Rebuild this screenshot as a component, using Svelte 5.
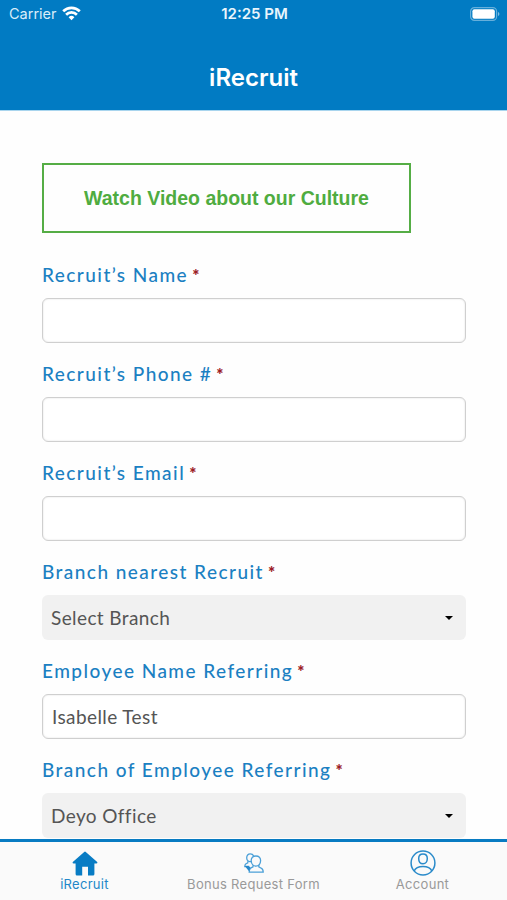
<script lang="ts">
  interface Field {
    id: string;
    label: string;
    type: 'text' | 'select';
    value: string;
  }

  let fields = $state<Field[]>([
    { id: 'name', label: 'Recruit’s Name', type: 'text', value: '' },
    { id: 'phone', label: 'Recruit’s Phone #', type: 'text', value: '' },
    { id: 'email', label: 'Recruit’s Email', type: 'text', value: '' },
    { id: 'branch', label: 'Branch nearest Recruit', type: 'select', value: 'Select Branch' },
    { id: 'employee', label: 'Employee Name Referring', type: 'text', value: 'Isabelle Test' },
    { id: 'office', label: 'Branch of Employee Referring', type: 'select', value: 'Deyo Office' },
  ]);

  const tabs = [
    { id: 'home', label: 'iRecruit' },
    { id: 'bonus', label: 'Bonus Request Form' },
    { id: 'account', label: 'Account' },
  ];

  let activeTab = $state('home');
</script>

<div class="screen">
  <header>
    <div class="status-bar">
      <div class="carrier">
        <span>Carrier</span>
        <svg width="19" height="15" viewBox="0 0 19 15" fill="none" stroke="#fff" stroke-width="2.7">
          <path d="M1.2 5.3a11.8 11.8 0 0 1 16.6 0" />
          <path d="M4.1 8.7a7.6 7.6 0 0 1 10.8 0" />
          <path d="M6.6 11.2a4.1 4.1 0 0 1 5.8 0L9.5 14.2z" fill="#fff" stroke="none" />
        </svg>
      </div>
      <span class="clock">12:25 PM</span>
      <svg class="battery" width="31" height="14" viewBox="0 0 31 14">
        <rect x="1.6" y="0.6" width="26" height="12.8" rx="3.8" fill="none" stroke="#fff" stroke-opacity="0.4" stroke-width="1.2" />
        <rect x="3.4" y="2.3" width="22.4" height="9.4" rx="2" fill="#fff" />
        <path d="M29 5c1.9.6 1.9 3.4 0 4z" fill="#fff" fill-opacity="0.5" />
      </svg>
    </div>
    <h1>iRecruit</h1>
  </header>

  <main>
    <button class="video-btn">Watch Video about our Culture</button>

    {#each fields as field}
      <div class="field">
        <label for={field.id}>
          <span>{field.label}</span>
          <span class="required">*</span>
        </label>
        {#if field.type === 'text'}
          <input id={field.id} type="text" bind:value={field.value} />
        {:else}
          <button id={field.id} class="select">
            <span>{field.value}</span>
            <svg width="8" height="4" viewBox="0 0 8 4"><path d="M0 0h8L4 4z" /></svg>
          </button>
        {/if}
      </div>
    {/each}
  </main>

  <nav>
    {#each tabs as tab}
      <button class="tab" class:active={activeTab === tab.id} onclick={() => (activeTab = tab.id)}>
        <span class="tab-icon">
          {#if tab.id === 'home'}
            <svg width="26" height="25" viewBox="0 0 26 25" fill="#087cc4">
              <path d="M12.2.9Q13 .3 13.8.9L25.2 11.1Q26 12.4 24.5 12.6H22.4V23Q22.4 24.5 21 24.5H16V15.8H10.2V24.5H5Q3.6 24.5 3.6 23V12.6H1.5Q0 12.4.8 11.1z" />
            </svg>
          {:else if tab.id === 'bonus'}
            <svg width="20" height="20" viewBox="0 0 20 20" fill="none" stroke="#4ba0d8" stroke-width="1.3">
              <path d="M7.3 8.3C4.9 9.4 2.7 7.7 2.7 5 2.7 2.4 4.1.9 6.2.9c1.7 0 2.9.8 3.5 2.1" />
              <path d="M3.8 8.3v1.5L1.7 11Q.8 11.7.8 13.5h4.500" />
              <path d="M7.200 7.800C7.100 4.800 8.900 3 11.900 3s4.800 1.800 4.700 4.800c-.2 3.100-2.100 5.300-4.700 5.300S7.300 10.900 7.200 7.800z" />
              <path d="M9 12.300v1.500l-2.400 1.300Q5.200 16 5.200 19.200h14c0-2.400-.5-3.400-2-4l-2.400-1.300v-1.600" />
              <path d="M.8 13l4.200 5.200 1.400-3.600-2-1.600z" fill="#2587ca" stroke="none" />
            </svg>
          {:else}
            <svg width="26" height="26" viewBox="0 0 26 26" fill="none" stroke="#2b8bca" stroke-width="1.5">
              <circle cx="13" cy="13" r="11.9" />
              <path d="M8.7 8.5C8.7 5.5 10.3 4 13 4s4.3 1.500 4.300 4.500c0 3.200-1.700 5.300-4.300 5.300s-4.300-2.100-4.300-5.300z" />
              <path d="M4.2 20.9c1.2-2.9 4.6-4.4 8.800-4.400s7.600 1.500 8.800 4.400" />
            </svg>
          {/if}
        </span>
        <span class="tab-label">{tab.label}</span>
      </button>
    {/each}
  </nav>
</div>

<style>
  :global(body) {
    margin: 0;
    background: #fefefe;
  }
  .screen {
    display: flex;
    flex-direction: column;
    height: 900px;
    overflow: hidden;
    background: #fefefe;
    font-family: Inter, 'Liberation Sans', sans-serif;
  }
  button {
    padding: 0;
    border: none;
    background: none;
    font-family: inherit;
    cursor: pointer;
  }
  header {
    flex: none;
    height: 111px;
    background: #017bc3;
    color: #fff;
    border-bottom: 1px solid #a9d5ee;
    box-sizing: border-box;
  }
  .status-bar {
    display: grid;
    grid-template-columns: 1fr auto 1fr;
    align-items: center;
    height: 27px;
    padding: 0 7px 0 9px;
  }
  .carrier {
    display: flex;
    align-items: center;
    gap: 5px;
    font-size: 14.5px;
    color: #d9edf9;
  }
  .clock {
    font-size: 15px;
    font-weight: 600;
    color: #e9f5fc;
  }
  .battery {
    justify-self: end;
  }
  h1 {
    margin: 37px 0 0;
    text-align: center;
    font-size: 24px;
    line-height: 28px;
    font-weight: 600;
  }
  main {
    flex: 1;
    min-height: 0;
    overflow: hidden;
    padding: 52px 41px 0 42px;
  }
  .video-btn {
    display: block;
    width: 369px;
    height: 70px;
    border: 2px solid #55ad45;
    color: #4fac40;
    font-family: 'Liberation Sans', Arial, sans-serif;
    font-size: 19.5px;
    font-weight: 700;
  }
  .video-btn + .field {
    margin-top: 32px;
  }
  .field {
    margin-bottom: 21px;
  }
  label {
    display: flex;
    gap: 4px;
    height: 33px;
    line-height: 20px;
    font-family: Lato, sans-serif;
    font-size: 19px;
    font-weight: 500;
    letter-spacing: 1.45px;
    color: #1b80c2;
    white-space: nowrap;
  }
  .required {
    color: #9c1c27;
    font-weight: 900;
    font-size: 17px;
    line-height: 22px;
  }
  input,
  .select {
    display: flex;
    align-items: center;
    justify-content: space-between;
    width: 100%;
    height: 45px;
    box-sizing: border-box;
    border-radius: 6px;
    font-family: Lato, sans-serif;
    font-size: 19px;
    letter-spacing: 0.4px;
    color: #555;
  }
  input {
    padding: 0 9px 1px;
    border: 1px solid #cfcfcf;
    background: #fff;
    box-shadow: inset 0 0 2px #ddd;
    outline: none;
  }
  .select {
    padding: 0 13px 0 9px;
    background: #f1f1f1;
  }
  nav {
    flex: none;
    display: grid;
    grid-template-columns: repeat(3, 1fr);
    height: 61px;
    box-sizing: border-box;
    border-top: 3px solid #087bc2;
    background: #fafafa;
  }
  .tab {
    display: flex;
    flex-direction: column;
    align-items: center;
    padding-top: 8px;
    color: #999;
  }
  .tab.active {
    color: #2287c8;
  }
  .tab-icon {
    display: flex;
    align-items: center;
    justify-content: center;
    height: 26px;
  }
  .tab-label {
    font-size: 13px;
    line-height: 16px;
    letter-spacing: 0.3px;
    white-space: nowrap;
  }
</style>
